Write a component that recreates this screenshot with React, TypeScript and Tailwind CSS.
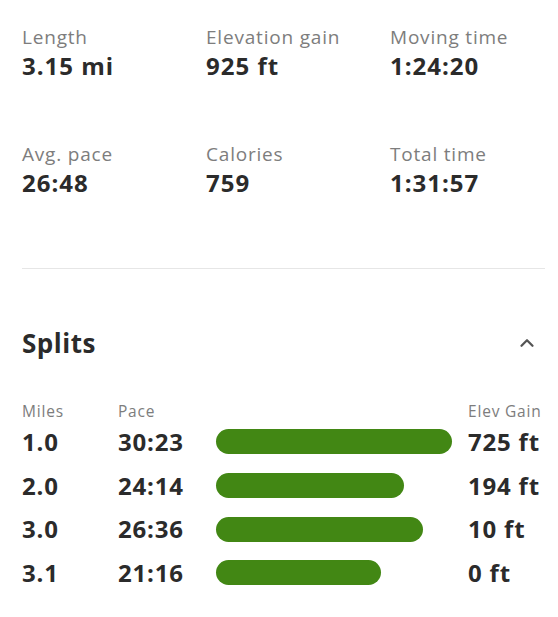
import { ChevronUp } from 'lucide-react';

const stats = [
  { label: 'Length', value: '3.15 mi' },
  { label: 'Elevation gain', value: '925 ft' },
  { label: 'Moving time', value: '1:24:20' },
  { label: 'Avg. pace', value: '26:48' },
  { label: 'Calories', value: '759' },
  { label: 'Total time', value: '1:31:57' },
];

const splits = [
  { mile: '1.0', pace: '30:23', elev: '725 ft' },
  { mile: '2.0', pace: '24:14', elev: '194 ft' },
  { mile: '3.0', pace: '26:36', elev: '10 ft' },
  { mile: '3.1', pace: '21:16', elev: '0 ft' },
];

const toSec = (p: string) => {
  const [m, s] = p.split(':').map(Number);
  return m * 60 + s;
};

export default function App() {
  const max = Math.max(...splits.map((s) => toSec(s.pace)));

  return (
    <div className="w-[558px] h-[617px] bg-white pl-[22px] pr-[13px] pt-[25px] font-['Open_Sans',sans-serif] text-[#2b2b2b]">
      {/* Stats grid */}
      <div className="grid grid-cols-[184px_184px_1fr] gap-y-[61px]">
        {stats.map((s) => (
          <div key={s.label}>
            <div className="text-[19px] leading-[24px] tracking-[0.8px] text-[#7d7d7d]">{s.label}</div>
            <div className="text-[24px] leading-[30px] tracking-[1px] font-bold mt-[2px]">{s.value}</div>
          </div>
        ))}
      </div>

      <div className="border-t border-[#e6e6e6] mt-[70px]" />

      {/* Splits header */}
      <div className="flex items-center justify-between mt-[56px]">
        <h2 className="text-[26px] leading-[36px] tracking-[0.5px] font-bold">Splits</h2>
        <ChevronUp className="w-[22px] h-[22px] text-[#555] mr-[7px]" strokeWidth={2.5} />
      </div>

      {/* Splits table */}
      <div className="mt-[40px]">
        <div className="flex text-[15.5px] leading-[20px] tracking-[0.8px] text-[#7d7d7d]">
          <div className="w-[96px]">Miles</div>
          <div className="w-[98px]">Pace</div>
          <div className="flex-1" />
          <div className="w-[77px] whitespace-nowrap">Elev Gain</div>
        </div>
        <div className="flex flex-col -mt-[1px]">
          {splits.map((s) => (
            <div key={s.mile} className="flex items-center h-[43.7px] text-[24px] leading-[30px] tracking-[0.8px] font-bold">
              <div className="w-[96px]">{s.mile}</div>
              <div className="w-[98px]">{s.pace}</div>
              <div className="flex-1 pr-[16px]">
                <div
                  className="h-[25px] rounded-full bg-[#428714]"
                  style={{ width: `${(toSec(s.pace) / max) * 100}%` }}
                />
              </div>
              <div className="w-[77px] whitespace-nowrap">{s.elev}</div>
            </div>
          ))}
        </div>
      </div>
    </div>
  );
}
